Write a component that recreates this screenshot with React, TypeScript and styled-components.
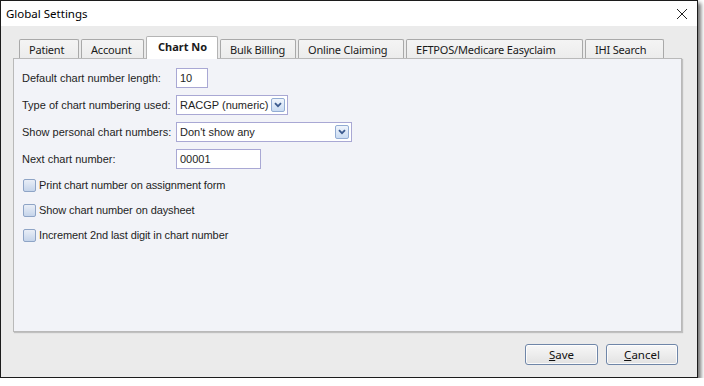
import styled, { createGlobalStyle } from "styled-components";

const GlobalStyle = createGlobalStyle`
  html, body {
    margin: 0;
    padding: 0;
    background: #ffffff;
  }
`;

const uiFont = `"Noto Sans", "Liberation Sans", sans-serif`;
const formFont = `"Liberation Sans", "DejaVu Sans", sans-serif`;

const Window = styled.div`
  width: 698px;
  height: 378px;
  box-sizing: border-box;
  border: 1px solid #1c1c1c;
  display: flex;
  flex-direction: column;
  box-shadow: 3px 3px 4px rgba(0, 0, 0, 0.55);
`;

const TitleBar = styled.div`
  height: 25px;
  background: #ffffff;
  display: flex;
  align-items: center;
  justify-content: space-between;
  padding: 0 9px 0 5px;
  font-family: ${uiFont};
  font-size: 11.5px;
  color: #000;
`;

const CloseIcon = styled.svg`
  width: 12px;
  height: 12px;
`;

const Body = styled.div`
  flex: 1;
  background: #ebebeb;
  padding: 10px 15px 12px 12px;
  display: flex;
  flex-direction: column;
`;

const TabStrip = styled.div`
  display: flex;
  align-items: flex-end;
  gap: 2px;
  height: 22px;
  padding-left: 6px;
  position: relative;
  z-index: 1;
`;

const Tab = styled.div<{ $w: number; $active?: boolean }>`
  width: ${({ $w }) => $w}px;
  height: ${({ $active }) => ($active ? 23 : 19)}px;
  margin-bottom: ${({ $active }) => ($active ? -1 : 0)}px;
  box-sizing: border-box;
  border: 1px solid ${({ $active }) => ($active ? "#b4b4b4" : "#a9a9a9")};
  border-bottom: none;
  border-radius: 2px 2px 0 0;
  background: ${({ $active }) =>
    $active ? "#ffffff" : "linear-gradient(#f4f4f4, #ececec)"};
  padding-left: ${({ $active }) => ($active ? 11 : 9)}px;
  padding-bottom: ${({ $active }) => ($active ? 3 : 0)}px;
  display: flex;
  align-items: center;
  font-family: ${uiFont};
  font-size: 11px;
  letter-spacing: ${({ $active }) => ($active ? 0 : -0.2)}px;
  font-weight: ${({ $active }) => ($active ? 700 : 400)};
  color: #1a1a1a;
  white-space: nowrap;
`;

const Panel = styled.div`
  flex: 1;
  background: #f2f3f8;
  border: 1px solid #b9b9b9;
  box-shadow: 1px 1px 1px rgba(0, 0, 0, 0.18);
  padding: 9px 8px;
  font-family: ${formFont};
  font-size: 11px;
  color: #1e1e1e;
`;

const FormGrid = styled.div`
  display: grid;
  grid-template-columns: 154px auto;
  row-gap: 7px;
  align-items: center;
`;

const Label = styled.div`
  white-space: nowrap;
`;

const Field = styled.div<{ $w: number }>`
  width: ${({ $w }) => $w}px;
  height: 20px;
  box-sizing: border-box;
  border: 1px solid #a9a8d4;
  background: #ffffff;
  display: flex;
  align-items: center;
  justify-content: space-between;
  padding: 0 2px 0 3px;
  font-size: 11px;
  white-space: nowrap;
`;

const DropButton = styled.div`
  width: 14px;
  height: 14px;
  flex: none;
  box-sizing: border-box;
  border: 1px solid #93acd3;
  border-radius: 2px;
  background: linear-gradient(#f0f5fc, #c9dbf2);
  display: flex;
  align-items: center;
  justify-content: center;
`;

const CheckList = styled.div`
  display: flex;
  flex-direction: column;
  gap: 5px;
  margin-top: 6px;
`;

const CheckRow = styled.label`
  display: flex;
  align-items: center;
  gap: 3px;
  height: 20px;
  padding-left: 1px;
  letter-spacing: -0.1px;
`;

const CheckBox = styled.span`
  width: 13px;
  height: 13px;
  box-sizing: border-box;
  border: 1px solid #8ea4c6;
  border-radius: 2px;
  background: linear-gradient(#e9eef7, #c5d4ea);
`;

const ButtonRow = styled.div`
  display: flex;
  justify-content: flex-end;
  gap: 8px;
  margin-top: 12px;
  padding-right: 4px;
`;

const DialogButton = styled.button<{ $w: number }>`
  width: ${({ $w }) => $w}px;
  height: 21px;
  border: 1px solid #6f86a8;
  border-radius: 3px;
  background: linear-gradient(#f7f7f7 0%, #ededed 50%, #e2e2e2 100%);
  box-shadow: inset 0 0 0 1px rgba(255, 255, 255, 0.8);
  font-family: ${uiFont};
  font-size: 11.5px;
  color: #111;
  padding: 0;
  u {
    text-decoration: underline;
  }
`;

const Chevron = () => (
  <svg width="8" height="6" viewBox="0 0 8 6">
    <path d="M1 1.2 L4 4.2 L7 1.2" fill="none" stroke="#3b5a8e" strokeWidth="1.8" />
  </svg>
);

const tabs = [
  { label: "Patient", w: 60 },
  { label: "Account", w: 63 },
  { label: "Chart No", w: 72, active: true },
  { label: "Bulk Billing", w: 76 },
  { label: "Online Claiming", w: 106 },
  { label: "EFTPOS/Medicare Easyclaim", w: 177 },
  { label: "IHI Search", w: 79 },
];

const checks = [
  "Print chart number on assignment form",
  "Show chart number on daysheet",
  "Increment 2nd last digit in chart number",
];

export default function App() {
  return (
    <>
      <GlobalStyle />
      <Window>
        <TitleBar>
          <span>Global Settings</span>
          <CloseIcon viewBox="0 0 12 12">
            <path d="M1 1 L11 11 M11 1 L1 11" stroke="#222" strokeWidth="1" />
          </CloseIcon>
        </TitleBar>
        <Body>
          <TabStrip>
            {tabs.map((t) => (
              <Tab key={t.label} $w={t.w} $active={t.active}>
                {t.label}
              </Tab>
            ))}
          </TabStrip>
          <Panel>
            <FormGrid>
              <Label>Default chart number length:</Label>
              <Field $w={32}>10</Field>
              <Label>Type of chart numbering used:</Label>
              <Field $w={112}>
                RACGP (numeric)
                <DropButton>
                  <Chevron />
                </DropButton>
              </Field>
              <Label>Show personal chart numbers:</Label>
              <Field $w={176}>
                Don't show any
                <DropButton>
                  <Chevron />
                </DropButton>
              </Field>
              <Label>Next chart number:</Label>
              <Field $w={85}>00001</Field>
            </FormGrid>
            <CheckList>
              {checks.map((c) => (
                <CheckRow key={c}>
                  <CheckBox />
                  {c}
                </CheckRow>
              ))}
            </CheckList>
          </Panel>
          <ButtonRow>
            <DialogButton $w={73}>
              <u>S</u>ave
            </DialogButton>
            <DialogButton $w={72}>
              <u>C</u>ancel
            </DialogButton>
          </ButtonRow>
        </Body>
      </Window>
    </>
  );
}
